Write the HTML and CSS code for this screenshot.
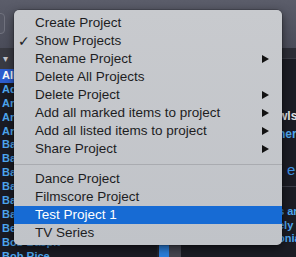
FILE: index.html
```html
<!DOCTYPE html>
<html lang="en">
<head>
   <meta charset="UTF-8">
   <title>Projects menu</title>
   <link rel="stylesheet" href="styles.css">
</head>
<body>
   <div id="app">
      <div class="toolbar">
         <div class="tool-btn"></div>
      </div>
      <div class="main">
         <div class="sidebar">
            <div class="col-head"><span class="sort">&#9662;</span></div>
            <ul class="names">
               <li class="selected">All</li>
               <li>Adam Lambert</li>
               <li>Andrea Bocelli</li>
               <li>Annie Lennox</li>
               <li>Arcade Fire</li>
               <li>Bach</li>
               <li>Backstreet Boys</li>
               <li>Bach Choir</li>
               <li>Barbra Streisand</li>
               <li>Basie</li>
               <li>Bauhaus</li>
               <li>Beck</li>
               <li>Bob Baspit</li>
               <li>Bob Rice</li>
            </ul>
         </div>
         <div class="split-blue"></div>
         <div class="split-gray"></div>
         <div class="detail">
            <div class="detail-head"></div>
            <p class="d-title">wls</p>
            <p class="d-sub">ner</p>
            <p class="d-edit">e</p>
            <div class="d-rule"></div>
            <p class="d-text">s ar</p>
            <p class="d-text">ely</p>
            <p class="d-text">onia</p>
         </div>
      </div>

      <div class="menu">
         <div class="item">Create Project</div>
         <div class="item"><span class="check">&#10003;</span>Show Projects</div>
         <div class="item sub">Rename Project</div>
         <div class="item">Delete All Projects</div>
         <div class="item sub">Delete Project</div>
         <div class="item sub">Add all marked items to project</div>
         <div class="item sub">Add all listed items to project</div>
         <div class="item sub">Share Project</div>
         <div class="sep"></div>
         <div class="item">Dance Project</div>
         <div class="item">Filmscore Project</div>
         <div class="item active">Test Project 1</div>
         <div class="item">TV Series</div>
      </div>
   </div>
</body>
</html>
```

FILE: styles.css
```css
html, body {
   margin: 0;
   padding: 0;
}

body {
   width: 296px;
   height: 257px;
   overflow: hidden;
   background: #1b1c24;
   font-family: "Liberation Sans", Arial, sans-serif;
}

#app {
   position: relative;
   width: 296px;
   height: 257px;
   display: flex;
   flex-direction: column;
}

.toolbar {
   height: 48px;
   flex: none;
   background: linear-gradient(#5b5d6a, #4a4c59);
   display: flex;
   align-items: flex-start;
}

.tool-btn {
   margin: 13px 0 0 -30px;
   width: 33px;
   height: 19px;
   border: 1px solid #70727e;
   border-radius: 4px;
   background: #555764;
}

.main {
   flex: 1;
   display: flex;
   min-height: 0;
}

.sidebar {
   width: 157px;
   flex: none;
   background: #1a1b23;
   border-right: 2px solid #24252e;
}

.col-head {
   height: 21px;
   background: #393a42;
   display: flex;
   align-items: center;
   padding-left: 3px;
}

.sort {
   color: #c4c5cc;
   font-size: 10px;
   line-height: 1;
}

.names {
   list-style: none;
   margin: 0;
   padding: 0;
}

.names li {
   height: 13.9px;
   line-height: 13.9px;
   padding-left: 2px;
   font-size: 11px;
   font-weight: 700;
   color: #4ea7ef;
   white-space: nowrap;
}

.names li.selected {
   background: #2d5dcf;
   color: #ffffff;
}

.split-blue {
   width: 10px;
   flex: none;
   background: #2a7fdc;
}

.split-gray {
   width: 12px;
   flex: none;
   background: #44454f;
}

.detail {
   flex: 1;
   background: #1b1c24;
   padding-left: 97px;
   white-space: nowrap;
}

.detail-head {
   height: 10px;
   margin-left: -97px;
   background: #2c2d36;
   border-bottom: 1px solid #3b3c46;
}

.detail p {
   margin: 0;
}

.d-title {
   margin-top: 50px !important;
   font-size: 12px;
   font-weight: 700;
   color: #e4e4e8;
   line-height: 14px;
}

.d-sub {
   margin-top: 4px !important;
   font-size: 12px;
   font-weight: 700;
   color: #4ea7ef;
   line-height: 14px;
}

.d-edit {
   margin-top: 20px !important;
   padding-left: 9px;
   font-size: 15px;
   color: #3d91e2;
   line-height: 18px;
}

.d-rule {
   height: 1px;
   margin: 7px 0 18px -97px;
   background: #3a3c47;
}

.d-text {
   font-size: 11px;
   font-weight: 700;
   color: #4ea7ef;
   line-height: 13.5px;
}

/* popup menu lies over the window */
.menu {
   position: absolute;
   left: 14px;
   top: 10px;
   width: 268px;
   height: 235px;
   box-sizing: border-box;
   padding: 4px 0 3px;
   border-radius: 5px;
   background: linear-gradient(#c8cace, #c0c3c8);
   box-shadow: 0 3px 10px rgba(0, 0, 0, 0.55), 0 0 0 0.5px rgba(0, 0, 0, 0.3);
   font-size: 13.5px;
   color: #1d1d1f;
}

.item {
   position: relative;
   height: 18px;
   line-height: 18px;
   padding-left: 21px;
   white-space: nowrap;
}

.check {
   position: absolute;
   left: 4px;
   top: 0;
   font-family: "DejaVu Sans", sans-serif;
   font-size: 14px;
   font-weight: 700;
}

.item.sub::after {
   content: "";
   position: absolute;
   right: 13px;
   top: 5px;
   border-left: 7px solid #121212;
   border-top: 4.5px solid transparent;
   border-bottom: 4.5px solid transparent;
}

.item.active {
   background: #176bd4;
   color: #ffffff;
}

.sep {
   height: 1px;
   margin: 6px 0 5px;
   background: #a9abb0;
}
```
